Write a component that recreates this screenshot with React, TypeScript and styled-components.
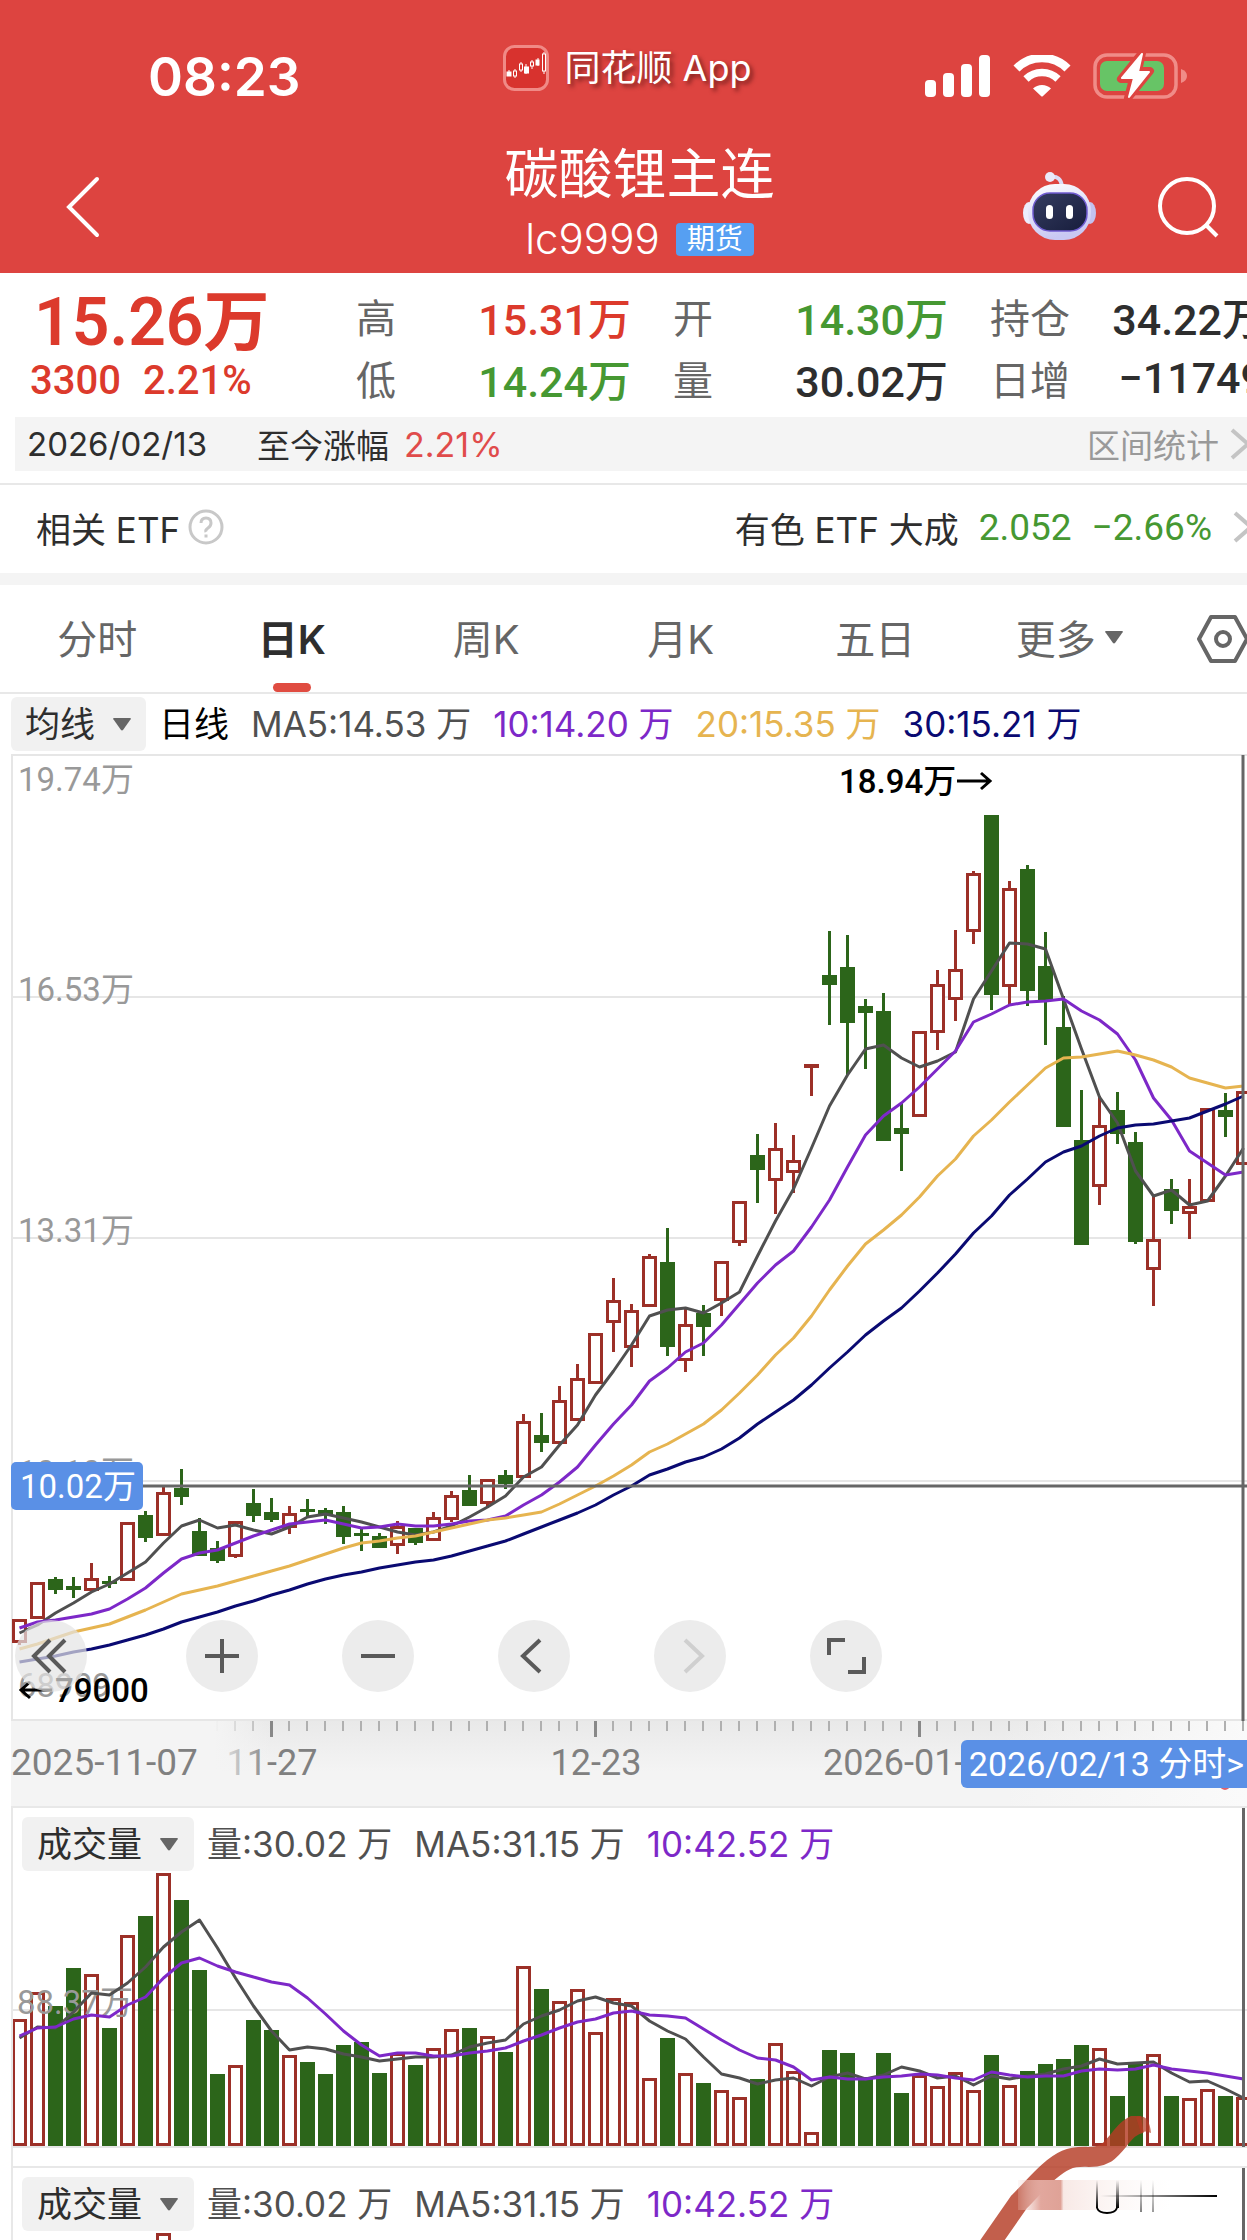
import React from "react";
import styled, { createGlobalStyle } from "styled-components";

const SANS = `Inter, "Noto Sans CJK SC", sans-serif`;
const NUM = `Roboto, "Noto Sans CJK SC", sans-serif`;

const C = {
  brand: "#dd4440",
  up: "#dc3a2c",
  down: "#469832",
  ink: "#2e2e2e",
  grey: "#666666",
  faint: "#999999",
  line: "#e8e8e8",
  soft: "#f4f4f4",
  tag: "#5a90e6",
  barUp: "#9c3028",
  barDown: "#2c651a",
  ma5: "#505050",
  ma10: "#7d28c8",
  ma20: "#e6b450",
  ma30: "#0a0a72",
};

const GlobalStyle = createGlobalStyle`
  *, *::before, *::after { box-sizing: border-box; }
  body { margin: 0; background: #fff; font-family: ${SANS}; color: ${C.ink}; }
  button, select { font: inherit; color: inherit; border: 0; background: none; padding: 0; margin: 0; }
  a { color: inherit; text-decoration: none; }
  h1, p, dl, dt, dd { margin: 0; font-weight: 400; }
  svg { display: block; }
`;

const Screen = styled.div`
  height: 100vh;
  overflow: hidden;
  background: #fff;
`;

/* ---------- header ---------- */

const Header = styled.header`
  background: ${C.brand};
  color: #fff;
`;

const StatusBar = styled.div`
  display: grid;
  grid-template-columns: 1fr auto 1fr;
  align-items: center;
  height: 141px;
  padding: 11px 60px 0;
`;

const Clock = styled.time`
  font-size: 53px;
  font-weight: 600;
  line-height: 60px;
  padding: 2px 0 0 88px;
`;

const Brand = styled.div`
  display: flex;
  align-items: center;
  gap: 15px;
  font-size: 36px;
  line-height: 52px;
  padding: 0 0 16px 8px;
  text-shadow: 3px 3px 4px rgba(60, 10, 10, 0.6);
`;

const StatusIcons = styled.div`
  display: flex;
  justify-content: flex-end;
  align-items: center;
  gap: 22px;
`;

const NavBar = styled.div`
  display: grid;
  grid-template-columns: 1fr auto 1fr;
  align-items: center;
  height: 132px;
  padding: 0 28px 0 60px;
`;

const IconButton = styled.button`
  display: flex;
  align-items: center;
  justify-self: start;
`;

const Title = styled.div`
  text-align: center;
`;

const Name = styled.h1`
  font-size: 54px;
  font-weight: 400;
  line-height: 64px;
`;

const Code = styled.p`
  display: flex;
  justify-content: center;
  align-items: center;
  gap: 16px;
  font-size: 42px;
  font-weight: 300;
  line-height: 64px;
`;

const Badge = styled.span`
  background: #569ff2;
  border-radius: 4px;
  padding: 0 11px;
  font-size: 28px;
  font-weight: 400;
  line-height: 33px;
`;

const NavActions = styled.div`
  display: flex;
  justify-content: flex-end;
  align-items: center;
  gap: 60px;
`;

/* ---------- quote ---------- */

const Quote = styled.section`
  display: grid;
  grid-template-columns: 314px repeat(3, 1fr);
  column-gap: 42px;
  width: calc(100% + 18px);
  height: 144px;
  padding-top: 12px;
`;

const PriceBlock = styled.div`
  font-family: ${NUM};
  color: ${C.up};
`;

const Price = styled.p`
  font-size: 66px;
  font-weight: 600;
  line-height: 76px;
  padding-left: 34px;
  white-space: nowrap;
`;

const Change = styled.p`
  display: flex;
  gap: 22px;
  font-size: 40px;
  font-weight: 500;
  line-height: 40px;
  padding-left: 30px;
`;

const Stats = styled.dl`
  display: grid;
  grid-template-rows: 62px 62px;
`;

const Stat = styled.div`
  display: flex;
  justify-content: space-between;
  align-items: center;
  white-space: nowrap;
`;

const StatName = styled.dt`
  font-size: 40px;
  color: ${C.grey};
`;

const StatValue = styled.dd<{ $color: string }>`
  font-family: ${NUM};
  font-size: 43px;
  font-weight: 500;
  color: ${(p) => p.$color};
`;

const RangeBar = styled.section`
  display: flex;
  align-items: center;
  height: 54px;
  margin: 0 0 12px 15px;
  padding-left: 12px;
  background: ${C.soft};
  font-size: 33px;
`;

const RangeLabel = styled.span`
  margin-left: 50px;
`;

const RangeValue = styled.span`
  margin-left: 15px;
  font-size: 34px;
  color: #e04b4b;
`;

const RangeLink = styled.a`
  display: flex;
  align-items: center;
  gap: 10px;
  margin: 0 -8px 0 auto;
  color: ${C.faint};
`;

const EtfBar = styled.section`
  display: flex;
  align-items: center;
  height: 102px;
  padding: 0 0 4px 36px;
  border-top: 2px solid ${C.line};
  border-bottom: 12px solid ${C.soft};
  font-size: 35px;
  white-space: nowrap;
  overflow: hidden;
`;

const Help = styled.button`
  margin-left: 8px;
`;

const EtfLink = styled.a`
  display: flex;
  align-items: center;
  gap: 20px;
  margin: 0 -11px 0 auto;
`;

const EtfNumber = styled.span`
  font-family: ${NUM};
  font-size: 37px;
  color: ${C.down};
`;

/* ---------- tabs ---------- */

const Tabs = styled.nav`
  display: flex;
  height: 109px;
  border-bottom: 2px solid ${C.line};
`;

const Tab = styled.button<{ $active?: boolean }>`
  position: relative;
  flex: 1;
  display: flex;
  align-items: center;
  justify-content: center;
  gap: 8px;
  padding-bottom: 4px;
  font-size: 40px;
  font-weight: ${(p) => (p.$active ? 600 : 400)};
  color: ${(p) => (p.$active ? C.ink : C.grey)};
  &::after {
    content: "";
    position: absolute;
    bottom: 0;
    width: 38px;
    height: 9px;
    border-radius: 5px;
    background: ${(p) => (p.$active ? "#e04c41" : "transparent")};
  }
`;

const Settings = styled.button`
  width: 80px;
  padding-left: 30px;
`;

/* ---------- chart ---------- */

const Legend = styled.div`
  display: flex;
  align-items: center;
  gap: 13px;
  height: 60px;
  padding-left: 11px;
  font-size: 35px;
  white-space: nowrap;
`;

const VolumeLegend = styled(Legend)`
  height: 64px;
  padding: 8px 0 0 9px;
`;

const LegendItem = styled.span<{ $color: string }>`
  line-height: 50px;
  color: ${(p) => p.$color};
  & + & {
    margin-left: 9px;
  }
`;

const Chip = styled.label<{ $pad: number }>`
  display: flex;
  align-items: center;
  gap: 16px;
  height: 54px;
  padding: 0 ${(p) => p.$pad}px;
  border-radius: 6px;
  background: #f1f1f1;
`;

const Picker = styled.select`
  appearance: none;
  line-height: 50px;
  outline: none;
`;

const ChartArea = styled.section`
  position: relative;
  margin-left: 11px;
`;

const Plot = styled.svg`
  width: 100%;
  height: auto;
  overflow: hidden;
`;

const Controls = styled.div`
  position: absolute;
  left: 4px;
  bottom: 29px;
  display: flex;
  gap: 84px;
`;

const Round = styled.button`
  display: grid;
  place-items: center;
  width: 72px;
  height: 72px;
  border-radius: 50%;
  background: rgba(228, 228, 228, 0.7);
  &:first-child {
    margin-right: 15px;
  }
`;

const Axis = styled.section`
  position: relative;
  margin-left: 11px;
`;

const DateTag = styled.button`
  position: absolute;
  right: -5px;
  top: 19px;
  height: 48px;
  padding: 0 8px;
  border-radius: 6px;
  background: ${C.tag};
  color: #fff;
  font-family: ${NUM};
  font-size: 34px;
  line-height: 42px;
  white-space: nowrap;
`;

const VolumePanel = styled.section`
  position: relative;
  margin-left: 11px;
  border-top: 2px solid ${C.line};
  border-left: 2px solid ${C.line};
  &::after {
    content: "";
    position: absolute;
    top: 0;
    right: 2px;
    bottom: 19px;
    width: 3px;
    background: #666;
  }
`;

const Brush = styled.svg`
  position: absolute;
  right: 0;
  top: -52px;
  z-index: 1;
  pointer-events: none;
`;

/* ---------- data: vertical positions on the price scale ---------- */

type Candle = [up: 0 | 1, high: number, top: number, bottom: number, low: number];

const candles: Candle[] = [
  [1, 1619, 1619, 1643, 1645], [1, 1582, 1582, 1619, 1619], [0, 1577, 1579, 1590, 1594],
  [0, 1577, 1586, 1590, 1598], [1, 1563, 1578, 1591, 1591], [0, 1576, 1581, 1584, 1588],
  [1, 1522, 1522, 1581, 1581], [0, 1511, 1515, 1538, 1542], [1, 1486, 1492, 1536, 1536],
  [0, 1469, 1488, 1497, 1505], [0, 1518, 1531, 1556, 1556], [0, 1541, 1548, 1561, 1563],
  [1, 1521, 1521, 1557, 1558], [0, 1489, 1503, 1516, 1522], [0, 1498, 1512, 1520, 1522],
  [1, 1506, 1513, 1528, 1534], [0, 1499, 1509, 1512, 1517], [0, 1508, 1510, 1515, 1524],
  [0, 1506, 1512, 1537, 1544], [0, 1529, 1533, 1536, 1551], [0, 1533, 1536, 1548, 1548],
  [1, 1521, 1526, 1546, 1554], [0, 1528, 1528, 1543, 1545], [1, 1512, 1517, 1541, 1541],
  [1, 1491, 1495, 1520, 1522], [0, 1475, 1490, 1506, 1506], [1, 1479, 1479, 1504, 1508],
  [0, 1470, 1475, 1484, 1489], [1, 1414, 1421, 1478, 1478], [0, 1413, 1435, 1443, 1452],
  [1, 1386, 1400, 1444, 1444], [1, 1364, 1378, 1421, 1421], [1, 1333, 1333, 1384, 1384],
  [1, 1278, 1300, 1323, 1352], [1, 1304, 1310, 1348, 1367], [1, 1254, 1256, 1307, 1307],
  [0, 1228, 1262, 1347, 1356], [1, 1308, 1324, 1361, 1372], [0, 1305, 1313, 1327, 1356],
  [1, 1261, 1261, 1301, 1316], [1, 1201, 1201, 1243, 1246], [0, 1134, 1155, 1170, 1203],
  [1, 1123, 1148, 1181, 1214], [1, 1135, 1160, 1173, 1193], [1, 1064, 1064, 1068, 1096],
  [0, 931, 975, 985, 1025], [0, 935, 967, 1023, 1075], [0, 999, 1006, 1013, 1069],
  [0, 993, 1011, 1141, 1141], [0, 1103, 1128, 1134, 1171], [1, 1031, 1031, 1117, 1117],
  [1, 970, 984, 1033, 1050], [1, 930, 969, 1000, 1021], [1, 871, 873, 932, 944],
  [0, 815, 815, 995, 1010], [1, 881, 888, 987, 1006], [0, 865, 869, 991, 1006],
  [0, 932, 966, 1000, 1045], [0, 996, 1027, 1127, 1127], [0, 1090, 1140, 1245, 1245],
  [1, 1096, 1125, 1187, 1205], [0, 1092, 1110, 1134, 1144], [0, 1132, 1142, 1242, 1244],
  [1, 1196, 1239, 1270, 1306], [0, 1179, 1189, 1211, 1224], [1, 1179, 1206, 1214, 1239],
  [1, 1108, 1108, 1202, 1202], [0, 1093, 1110, 1117, 1137], [1, 1091, 1091, 1165, 1165],
];

const priceMa5 = [
  1633, 1625, 1613, 1603, 1592, 1584, 1573, 1562, 1543, 1526, 1520, 1528, 1525, 1530, 1534, 1527, 1517, 1514,
  1518, 1522, 1527, 1532, 1535, 1532, 1526, 1517, 1507, 1496, 1477, 1467, 1445, 1425, 1395, 1371, 1345, 1316,
  1310, 1308, 1313, 1303, 1292, 1256, 1221, 1189, 1148, 1106, 1075, 1049, 1045, 1058, 1067, 1061, 1052, 999,
  971, 943, 944, 949, 999, 1049, 1097, 1123, 1171, 1196, 1190, 1205, 1201, 1176, 1148,
];

const priceMa10 = [
  1628, 1622, 1620, 1617, 1614, 1609, 1599, 1588, 1573, 1559, 1553, 1550, 1543, 1536, 1530, 1524, 1522, 1520,
  1524, 1528, 1527, 1524, 1526, 1526, 1524, 1521, 1520, 1516, 1505, 1495, 1482, 1467, 1445, 1424, 1405, 1381,
  1368, 1352, 1343, 1325, 1304, 1283, 1265, 1251, 1227, 1200, 1167, 1135, 1116, 1103, 1087, 1069, 1051, 1022,
  1014, 1005, 1002, 1001, 999, 1011, 1020, 1034, 1060, 1098, 1120, 1151, 1163, 1175, 1172,
];

const priceMa20 = [
  1649, 1644, 1638, 1632, 1628, 1624, 1617, 1610, 1602, 1594, 1590, 1586, 1581, 1576, 1571, 1566, 1560, 1554,
  1548, 1543, 1541, 1538, 1536, 1532, 1528, 1524, 1520, 1518, 1515, 1512, 1504, 1495, 1486, 1476, 1465, 1452,
  1444, 1434, 1424, 1410, 1393, 1375, 1355, 1338, 1316, 1290, 1266, 1244, 1230, 1215, 1197, 1176, 1159, 1136,
  1120, 1102, 1085, 1068, 1058, 1057, 1054, 1051, 1055, 1060, 1067, 1078, 1083, 1088, 1086,
];

const priceMa30 = [
  1662, 1659, 1656, 1652, 1649, 1645, 1640, 1635, 1629, 1622, 1617, 1612, 1606, 1601, 1595, 1590, 1584, 1579,
  1575, 1572, 1568, 1565, 1562, 1560, 1556, 1551, 1546, 1541, 1534, 1527, 1520, 1513, 1505, 1495, 1486, 1475,
  1469, 1462, 1457, 1449, 1438, 1424, 1412, 1400, 1385, 1368, 1352, 1335, 1321, 1308, 1291, 1273, 1254, 1233,
  1216, 1195, 1179, 1162, 1152, 1146, 1136, 1128, 1125, 1124, 1121, 1118, 1111, 1104, 1096,
];

const volumes = [
  2019, 1992, 2006, 1968, 1974, 2028, 1935, 1916, 1873, 1900, 1970, 2074, 2065, 2020, 2030, 2055, 2062, 2074,
  2045, 2042, 2073, 2053, 2065, 2048, 2029, 2028, 2036, 2052, 1966, 1989, 2001, 1989, 2032, 1998, 2002, 2078,
  2038, 2073, 2083, 2090, 2097, 2079, 2043, 2071, 2132, 2050, 2053, 2077, 2053, 2093, 2075, 2086, 2072, 2090,
  2055, 2085, 2071, 2064, 2059, 2045, 2048, 2096, 2064, 2054, 2096, 2098, 2089, 2096, 2097,
];

const risingVolume = new Set([
  0, 1, 4, 6, 8, 12, 15, 21, 23, 24, 26, 28, 30, 31, 32, 33, 34, 35, 37, 39, 40, 42, 43, 44, 50, 51, 52, 53, 55,
  60, 63, 65, 66, 68,
]);

const volMa5 = [
  2038, 2027, 2028, 2012, 1993, 1995, 1983, 1967, 1947, 1932, 1920, 1948, 1978, 2006, 2031, 2050, 2047, 2049,
  2054, 2057, 2061, 2059, 2057, 2057, 2055, 2047, 2043, 2040, 2024, 2016, 2010, 2001, 1997, 2003, 2006, 2021,
  2031, 2039, 2057, 2074, 2078, 2084, 2080, 2078, 2086, 2077, 2073, 2079, 2075, 2067, 2071, 2078, 2076, 2085,
  2076, 2079, 2076, 2074, 2069, 2066, 2059, 2064, 2063, 2062, 2073, 2082, 2081, 2089, 2098,
];

const volMa10 = [
  2036, 2028, 2027, 2019, 2015, 2017, 2005, 1997, 1978, 1963, 1958, 1966, 1972, 1977, 1982, 1985, 1998, 2014,
  2031, 2045, 2056, 2053, 2053, 2056, 2056, 2053, 2051, 2048, 2041, 2035, 2028, 2022, 2019, 2013, 2011, 2015,
  2016, 2018, 2029, 2040, 2050, 2058, 2060, 2067, 2080, 2077, 2079, 2079, 2077, 2076, 2074, 2075, 2078, 2080,
  2072, 2075, 2077, 2076, 2076, 2071, 2069, 2070, 2069, 2065, 2069, 2071, 2073, 2076, 2079,
];

const STEP = 18;
const centre = (i: number) => 19.5 + i * STEP;
const toPoints = (ys: number[]) => ys.map((y, i) => `${centre(i)},${y}`).join(" ");

const Line = ({ ys, color }: { ys: number[]; color: string }) => (
  <polyline points={toPoints(ys)} fill="none" stroke={color} strokeWidth={3} strokeLinejoin="round" />
);

const Body = ({ i, up, top, bottom }: { i: number; up: boolean; top: number; bottom: number }) => {
  const x = centre(i) - 7.5;
  const h = bottom - top;
  if (up && h > 4) {
    return <rect x={x + 1.5} y={top + 1.5} width={12} height={h - 3} fill="#fff" stroke={C.barUp} strokeWidth={3} />;
  }
  return <rect x={x} y={top} width={15} height={h} fill={up ? C.barUp : C.barDown} />;
};

const Triangle = () => (
  <svg width="20" height="14" viewBox="0 0 20 14" aria-hidden>
    <path d="M2 1h16q1.500 0 .6 1.300l-7.400 10.500q-1.200 1.200-2.400 0L1.400 2.300Q.5 1 2 1z" fill="#666" />
  </svg>
);

const Chevron = () => (
  <svg width="26" height="34" viewBox="0 0 26 34" fill="none" stroke="#c4c4c4" strokeWidth="4" aria-hidden>
    <path d="M3 3l16 14L3 31" />
  </svg>
);

const AppMark = () => (
  <svg width="46" height="46" viewBox="0 0 46 46" aria-hidden>
    <rect x="1.500" y="1.500" width="43" height="43" rx="10" fill="#d8322e" stroke="#f08a86" strokeWidth="3" />
    <g fill="#fff" stroke="#fff">
      <path d="M6 25v6M12 24v9M18 17v10M23 19v10M29 15v9M35 13v8M41 7v22" strokeWidth="1" />
      <rect x="4" y="27" width="4" height="4" />
      <rect x="10.500" y="26" width="3" height="5" fill="#d8322e" />
      <rect x="16.500" y="19" width="3" height="6" fill="#d8322e" />
      <rect x="21.500" y="22" width="4" height="6" />
      <rect x="27.500" y="17" width="3" height="4" fill="#d8322e" />
      <rect x="33" y="15" width="3" height="5" />
      <rect x="39.500" y="9" width="3" height="17" fill="#d8322e" />
    </g>
  </svg>
);

const Signal = () => (
  <svg width="66" height="42" viewBox="0 0 66 42" fill="#fff" aria-hidden>
    <rect x="0" y="25" width="11" height="17" rx="4" />
    <rect x="18" y="18" width="11" height="24" rx="4" />
    <rect x="36" y="9" width="11" height="33" rx="4" />
    <rect x="54" y="0" width="11" height="42" rx="4" />
  </svg>
);

const Wifi = () => (
  <svg width="58" height="42" viewBox="0 0 58 42" aria-hidden>
    <g fill="none" stroke="#fff">
      <path d="M3.500 13.500a36 36 0 0 1 51 0" strokeWidth="8.500" />
      <path d="M13 24a23 23 0 0 1 32 0" strokeWidth="7.500" />
    </g>
    <path d="M20 33.500a13 13 0 0 1 18 0l-8 7.500q-1 1-2 0z" fill="#fff" />
  </svg>
);

const Battery = () => (
  <svg width="94" height="46" viewBox="0 0 94 46" aria-hidden>
    <rect x="2" y="2" width="81" height="42" rx="12" fill="none" stroke="#f08c88" strokeWidth="3.500" />
    <path d="M88 16q6 2 6 7t-6 7z" fill="#f08c88" />
    <rect x="7" y="8" width="64" height="30" rx="7" fill="#67c466" />
    <path d="M49 0L28 26h12l-5 19 22-27H45z" fill="#fff" stroke={C.brand} strokeWidth="8" strokeLinejoin="round" />
    <path d="M49 1L29 25h12l-5 19 20-25H45z" fill="#fff" stroke="#fff" strokeWidth="2" strokeLinejoin="round" />
  </svg>
);

const Robot = () => (
  <svg width="74" height="70" viewBox="0 0 74 70" aria-hidden>
    <defs>
      <linearGradient id="shell" x1="0" y1="0" x2="0.3" y2="1">
        <stop offset="0" stopColor="#fff" />
        <stop offset="1" stopColor="#c9c8f3" />
      </linearGradient>
      <linearGradient id="visor" x1="0" y1="0" x2="1" y2="1">
        <stop offset="0" stopColor="#353c60" />
        <stop offset="1" stopColor="#171d3c" />
      </linearGradient>
    </defs>
    <path d="M27 5q11-2 12 10" fill="none" stroke="#dcdcf6" strokeWidth="4" />
    <circle cx="27" cy="5" r="5" fill="#eaeafb" />
    <ellipse cx="6" cy="41" rx="6" ry="11" fill="#ececfc" />
    <ellipse cx="67" cy="41" rx="6" ry="11" fill="#c3c2ef" />
    <rect x="5" y="12" width="63" height="56" rx="27" fill="url(#shell)" />
    <rect x="10" y="21" width="54" height="38" rx="17" fill="url(#visor)" stroke="#6f5bd0" strokeWidth="1.500" />
    <rect x="23" y="33" width="7" height="14" rx="3.500" fill="#fff" />
    <rect x="43" y="33" width="7" height="14" rx="3.500" fill="#fff" />
  </svg>
);

const PriceChart = () => (
  <Plot viewBox="11 754 1236 967" role="img" aria-label="日K线图">
    <g stroke="#e6e6e6" strokeWidth="2">
      <path d="M11 755H1247M12 754V1721M11 997H1247M11 1238H1247M11 1481H1247M11 1720H1247" fill="none" />
    </g>
    {candles.map(([up, high, top, bottom, low], i) => (
      <g key={i}>
        <rect x={centre(i) - 1.5} y={high} width={3} height={low - high} fill={up ? C.barUp : C.barDown} />
        <Body i={i} up={!!up} top={top} bottom={bottom} />
      </g>
    ))}
    <Line ys={priceMa5} color={C.ma5} />
    <Line ys={priceMa10} color={C.ma10} />
    <Line ys={priceMa20} color={C.ma20} />
    <Line ys={priceMa30} color={C.ma30} />
    <g fontFamily={NUM} fontSize="33" fill={C.faint}>
      <text x="18" y="791">19.74万</text>
      <text x="18" y="1001">16.53万</text>
      <text x="18" y="1242">13.31万</text>
      <text x="18" y="1484">10.10万</text>
      <text x="18" y="1697">68909</text>
    </g>
    <path d="M11 1486H1247M1243 755V1721" stroke="#666" strokeWidth="3" fill="none" />
    <rect x="11" y="1462" width="132" height="48" rx="5" fill={C.tag} />
    <text x="20" y="1498" fontFamily={NUM} fontSize="33" fill="#fff">10.02万</text>
    <g fontFamily={NUM} fontSize="33" fontWeight="500" fill="#000">
      <text x="839" y="793">18.94万</text>
      <text x="55" y="1702">79000</text>
    </g>
    <g stroke="#000" strokeWidth="3" fill="none">
      <path d="M957 781H990M981 773l9 8-9 8M52 1690H21M30 1682l-9 8 9 8" />
    </g>
  </Plot>
);

const DateAxis = () => (
  <Plot viewBox="11 1721 1236 85" role="img" aria-label="日期">
    <defs>
      <linearGradient id="axisShade" x1="0" y1="0" x2="0" y2="1">
        <stop offset="0" stopColor="#e9e9e9" />
        <stop offset="0.6" stopColor={C.soft} />
      </linearGradient>
      <linearGradient id="axisFade" x1="0" y1="0" x2="1" y2="0">
        <stop offset="0.78" stopColor={C.soft} />
        <stop offset="1" stopColor={C.soft} stopOpacity="0" />
      </linearGradient>
      <linearGradient id="axisFadeRight" x1="0" y1="0" x2="1" y2="0">
        <stop offset="0" stopColor="#fafafa" stopOpacity="0" />
        <stop offset="1" stopColor="#fafafa" />
      </linearGradient>
    </defs>
    <rect x="11" y="1721" width="1236" height="85" fill="url(#axisShade)" />
    <rect x="1000" y="1721" width="247" height="85" fill="url(#axisFadeRight)" />
    {candles.map((_, i) => {
      const major = i === 14 || i === 32 || i === 50;
      return (
        <rect key={i} x={centre(i) - 1.5} y="1721" width={major ? 3 : 2} height={major ? 16 : 10} fill={major ? "#888" : "#b0b0b0"} />
      );
    })}
    <g fontFamily={NUM} fontSize="36" fill="#808080" textAnchor="middle">
      <text x="272" y="1775">11-27</text>
      <text x="596" y="1775">12-23</text>
      <text x="914" y="1775">2026-01-20</text>
    </g>
    <rect x="11" y="1721" width="260" height="85" fill="url(#axisFade)" />
    <text x="11" y="1775" fontFamily={NUM} fontSize="37" fill="#808080">2025-11-07</text>
    <circle cx="1225" cy="1785" r="5" fill="#e0606a" />
  </Plot>
);

const VolumeChart = () => (
  <Plot viewBox="13 1872 1234 294" role="img" aria-label="成交量图">
    <path d="M11 2010H1247M11 2147H1247" stroke="#e6e6e6" strokeWidth="2" />
    {volumes.map((top, i) => (
      <Body key={i} i={i} up={risingVolume.has(i)} top={top} bottom={2146} />
    ))}
    <text x="17" y="2014" fontFamily={NUM} fontSize="33" fill={C.faint}>88.37万</text>
    <Line ys={volMa5} color={C.ma5} />
    <Line ys={volMa10} color={C.ma10} />
  </Plot>
);

const BrushStroke = () => (
  <Brush width="280" height="124" viewBox="967 2116 280 124" aria-hidden>
    <defs>
      <linearGradient id="smear" x1="0" y1="0" x2="1" y2="0">
        <stop offset="0" stopColor="#f3dcd8" stopOpacity="0.2" />
        <stop offset="0.15" stopColor="#e2a79d" />
        <stop offset="0.28" stopColor="#dfa297" />
        <stop offset="0.3" stopColor="#f8e9e6" />
        <stop offset="1" stopColor="#fff" stopOpacity="0.4" />
      </linearGradient>
      <linearGradient id="dash" x1="0" y1="0" x2="1" y2="0">
        <stop offset="0" stopColor="#000" stopOpacity="0" />
        <stop offset="1" stopColor="#000" />
      </linearGradient>
      <linearGradient id="drip" x1="0" y1="0" x2="0" y2="1">
        <stop offset="0" stopColor="#000" stopOpacity="0" />
        <stop offset="1" stopColor="#000" />
      </linearGradient>
    </defs>
    <path
      d="M980 2258L1019 2202C1035 2186 1050 2167 1066 2160C1082 2153 1092 2161 1106 2153C1120 2143 1124 2126 1142 2123"
      fill="none" stroke="#b43c24" strokeOpacity="0.82" strokeWidth="20"
    />
    <path d="M1136 2117q13-4 15 16-6-3-10 0z" fill="#b43c24" fillOpacity="0.7" />
    <rect x="1018" y="2180" width="152" height="30" fill="url(#smear)" />
    <rect x="1096" y="2180" width="2" height="28" fill="url(#drip)" />
    <rect x="1116" y="2180" width="3" height="28" fill="url(#drip)" />
    <path d="M1097 2208q2 5 10 5t10-5" fill="none" stroke="#000" strokeWidth="2" />
    <rect x="1140" y="2180" width="2" height="32" fill="url(#drip)" opacity="0.5" />
    <rect x="1152" y="2180" width="2" height="32" fill="url(#drip)" opacity="0.4" />
    <rect x="1100" y="2195" width="117" height="2" fill="url(#dash)" />
  </Brush>
);

const Volume = ({ children }: { children?: React.ReactNode }) => (
  <VolumePanel>
    <VolumeLegend>
      <Chip $pad={15}>
        <Picker aria-label="副图指标">
          <option>成交量</option>
        </Picker>
        <Triangle />
      </Chip>
      <LegendItem $color={C.ma5}>量:30.02 万</LegendItem>
      <LegendItem $color={C.ma5}>MA5:31.15 万</LegendItem>
      <LegendItem $color={C.ma10}>10:42.52 万</LegendItem>
    </VolumeLegend>
    <VolumeChart />
    {children}
  </VolumePanel>
);

const stats: [string, string, string][][] = [
  [["高", "15.31万", C.up], ["低", "14.24万", C.down]],
  [["开", "14.30万", C.down], ["量", "30.02万", C.ink]],
  [["持仓", "34.22万", C.ink], ["日增", "−11749", C.ink]],
];

const controls: [string, string, string][] = [
  ["最早", "M-1-16l-16 16 16 16M14-16l-16 16 16 16", "#5a5a5a"],
  ["放大", "M-17 0H17M0-17V17", "#5a5a5a"],
  ["缩小", "M-17 0H17", "#5a5a5a"],
  ["左移", "M6-16l-17 16 17 16", "#5a5a5a"],
  ["右移", "M-5-16l17 16-17 16", "#cfcfcf"],
  ["全屏", "M-17-1V-16H-1M18 1V16H2", "#5a5a5a"],
];

export default function App() {
  return (
    <Screen>
      <GlobalStyle />
      <Header>
        <StatusBar>
          <Clock>08:23</Clock>
          <Brand>
            <AppMark />
            同花顺 App
          </Brand>
          <StatusIcons>
            <Signal />
            <Wifi />
            <Battery />
          </StatusIcons>
        </StatusBar>
        <NavBar>
          <IconButton aria-label="返回">
            <svg width="44" height="64" viewBox="0 0 44 64" fill="none" stroke="#fff" strokeWidth="4" strokeLinecap="round">
              <path d="M37 4L9 32l28 28" />
            </svg>
          </IconButton>
          <Title>
            <Name>碳酸锂主连</Name>
            <Code>
              lc9999 <Badge>期货</Badge>
            </Code>
          </Title>
          <NavActions>
            <IconButton aria-label="智能助手">
              <Robot />
            </IconButton>
            <IconButton aria-label="搜索">
              <svg width="62" height="62" viewBox="0 0 62 62" fill="none" stroke="#fff" strokeWidth="4">
                <circle cx="30" cy="30" r="27" />
                <path d="M49 49l11 11" />
              </svg>
            </IconButton>
          </NavActions>
        </NavBar>
      </Header>

      <Quote>
        <PriceBlock>
          <Price>15.26万</Price>
          <Change>
            <span>3300</span>
            <span>2.21%</span>
          </Change>
        </PriceBlock>
        {stats.map((column, i) => (
          <Stats key={i}>
            {column.map(([name, value, color]) => (
              <Stat key={name}>
                <StatName>{name}</StatName>
                <StatValue $color={color}>{value}</StatValue>
              </Stat>
            ))}
          </Stats>
        ))}
      </Quote>

      <RangeBar>
        <span>2026/02/13</span>
        <RangeLabel>至今涨幅</RangeLabel>
        <RangeValue>2.21%</RangeValue>
        <RangeLink href="#range">
          区间统计
          <Chevron />
        </RangeLink>
      </RangeBar>

      <EtfBar>
        相关 ETF
        <Help aria-label="说明">
          <svg width="36" height="36" viewBox="0 0 36 36" fill="none" stroke="#c8c8c8" strokeWidth="3">
            <circle cx="18" cy="18" r="16" />
            <path d="M13 14q0-5 5-5t5 5q0 3-3 5t-2 4M18 25.500v3" />
          </svg>
        </Help>
        <EtfLink href="#etf">
          <span>有色 ETF 大成</span>
          <EtfNumber>2.052</EtfNumber>
          <EtfNumber>−2.66%</EtfNumber>
          <Chevron />
        </EtfLink>
      </EtfBar>

      <Tabs>
        <Tab>分时</Tab>
        <Tab $active>日K</Tab>
        <Tab>周K</Tab>
        <Tab>月K</Tab>
        <Tab>五日</Tab>
        <Tab>
          更多
          <Triangle />
        </Tab>
        <Settings aria-label="设置">
          <svg width="54" height="48" viewBox="0 0 54 48" fill="none" stroke="#666" strokeWidth="4">
            <path d="M14 2h24l12 22-12 22H14L2 24z" strokeLinejoin="round" />
            <circle cx="26" cy="24" r="7" />
          </svg>
        </Settings>
      </Tabs>

      <Legend>
        <Chip $pad={14}>
          <Picker aria-label="主图指标">
            <option>均线</option>
          </Picker>
          <Triangle />
        </Chip>
        <LegendItem $color="#000">日线</LegendItem>
        <LegendItem $color={C.ma5}>MA5:14.53 万</LegendItem>
        <LegendItem $color={C.ma10}>10:14.20 万</LegendItem>
        <LegendItem $color={C.ma20}>20:15.35 万</LegendItem>
        <LegendItem $color={C.ma30}>30:15.21 万</LegendItem>
      </Legend>

      <ChartArea>
        <PriceChart />
        <Controls>
          {controls.map(([label, d, color]) => (
            <Round key={label} aria-label={label}>
              <svg width="40" height="40" viewBox="-20 -20 40 40" fill="none" stroke={color} strokeWidth="4">
                <path d={d} />
              </svg>
            </Round>
          ))}
        </Controls>
      </ChartArea>

      <Axis>
        <DateAxis />
        <DateTag>2026/02/13 分时&gt;</DateTag>
      </Axis>

      <Volume />
      <Volume>
        <BrushStroke />
      </Volume>
    </Screen>
  );
}
